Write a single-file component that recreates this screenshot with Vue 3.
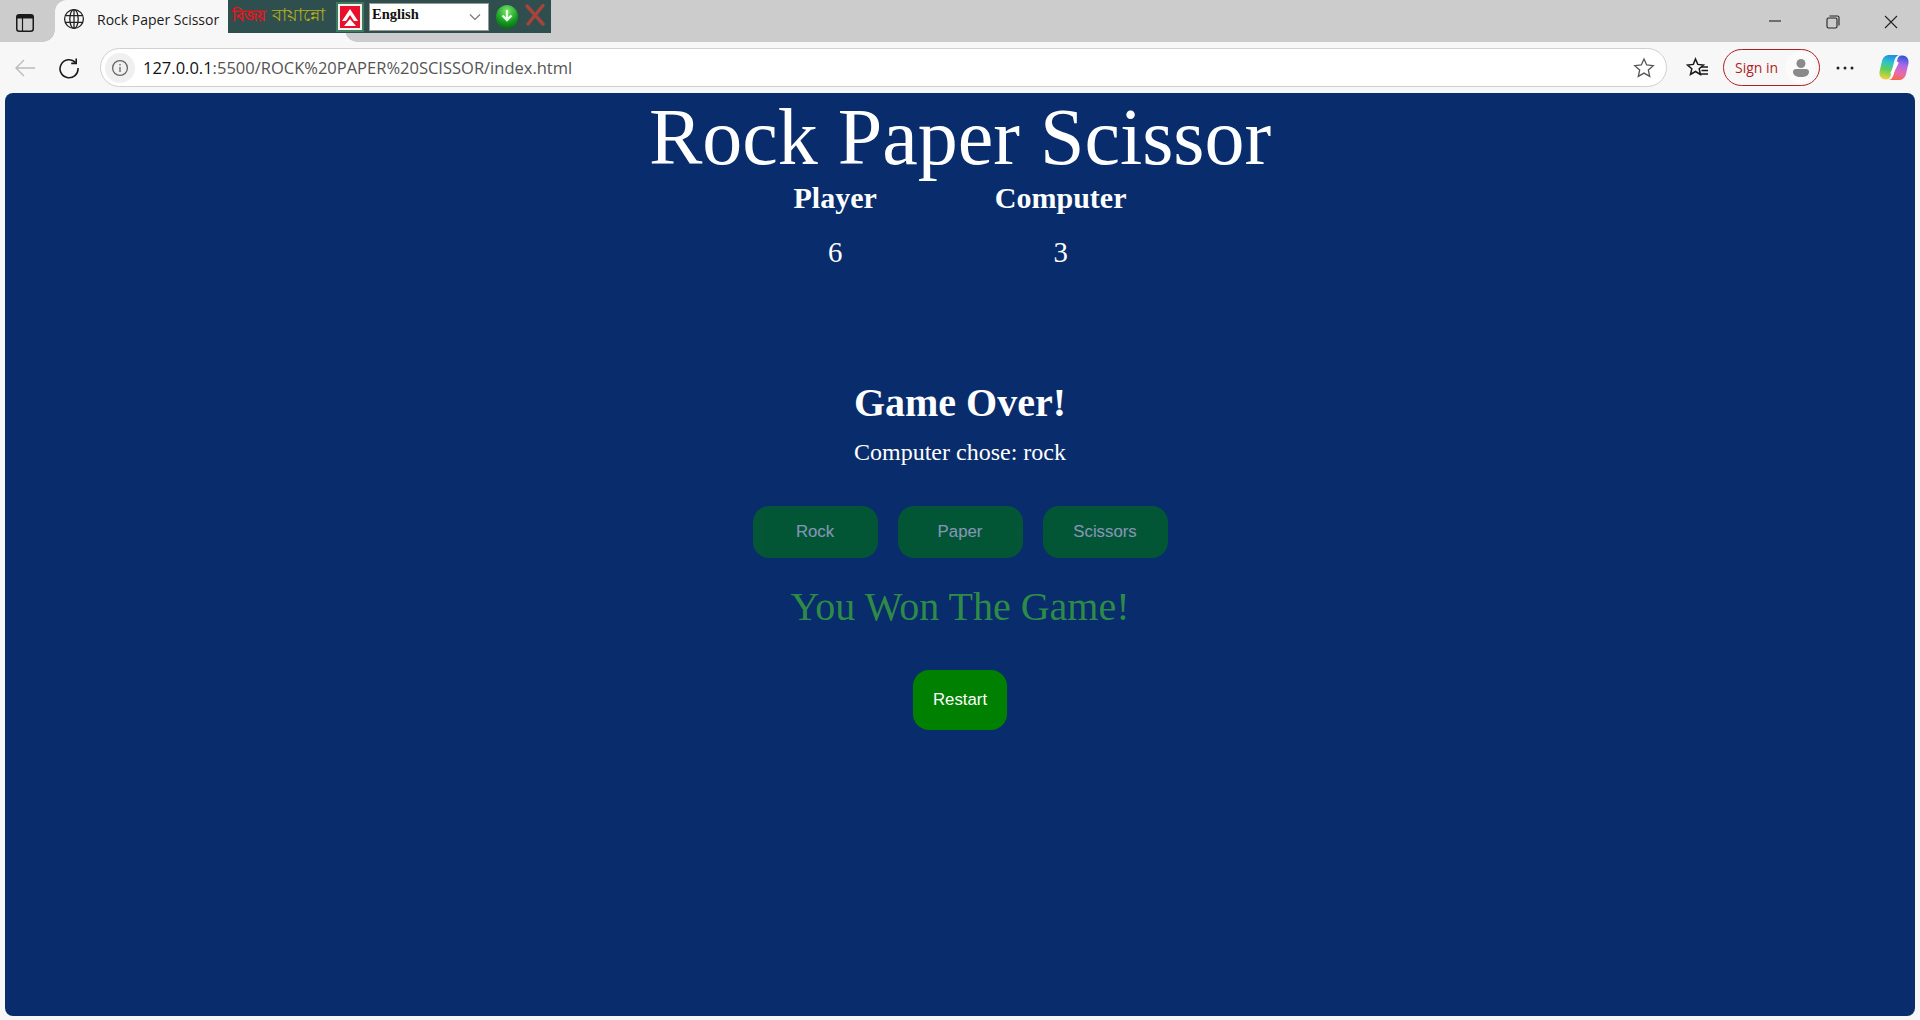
<template>
  <div class="browser">
    <!-- TAB STRIP -->
    <header class="tabstrip">
      <div class="tab-side">
        <svg width="18" height="18" viewBox="0 0 18 18" fill="none" stroke="#1a1a1a" stroke-width="1.5">
          <rect x="0.75" y="0.75" width="16.5" height="16.5" rx="2.5" />
          <path d="M1 1h16v3.500H1z" fill="#1a1a1a" stroke="none" />
          <path d="M6.500 4v13" stroke-width="1.2" />
        </svg>
      </div>
      <div class="tab">
        <svg class="globe" width="22" height="22" viewBox="0 0 22 22" fill="none" stroke="#222" stroke-width="1.3">
          <circle cx="11" cy="11" r="9.4" />
          <ellipse cx="11" cy="11" rx="4.2" ry="9.4" />
          <path d="M2.4 7.6h17.2M2.4 14.4h17.2M11 1.600v18.800" />
        </svg>
        <span class="tab-title">Rock Paper Scissor</span>
      </div>

      <!-- keyboard extension bar sitting over the tab strip -->
      <div class="ext-bar">
        <span class="ext-red" lang="bn">বিজয়</span>
        <span class="ext-yellow" lang="bn">বায়ান্নো</span>
        <span class="ext-logo">
          <svg width="20" height="22" viewBox="0 0 20 22">
            <rect width="20" height="22" fill="#e8102a" />
            <path d="M10 3 L18 15 H14 L10 9 L6 15 H2 Z" fill="#fff" />
            <path d="M4 20 L10 13 L16 20 Z" fill="#fff" />
          </svg>
        </span>
        <span class="ext-select">
          English
          <svg width="12" height="8" viewBox="0 0 12 8" fill="none" stroke="#777" stroke-width="1.2"><path d="M1 1.5l5 5 5-5" /></svg>
        </span>
        <span class="ext-down">
          <svg width="16" height="16" viewBox="0 0 16 16" fill="none" stroke="#e8ffe8" stroke-width="2.4"><path d="M8 1v9M3.500 6.500L8 11l4.500-4.500" /></svg>
        </span>
        <svg class="ext-close" width="22" height="22" viewBox="0 0 22 22" fill="none" stroke="#a6433c" stroke-width="3.4" stroke-linecap="round">
          <path d="M3 2l16 18M19 1.500L4 20" />
        </svg>
      </div>

      <div class="win-controls">
        <svg width="14" height="14" viewBox="0 0 14 14" stroke="#222" stroke-width="1.1"><path d="M1 6h12" /></svg>
        <svg width="14" height="14" viewBox="0 0 14 14" fill="none" stroke="#222" stroke-width="1.1">
          <rect x="1" y="3" width="10" height="10" rx="1.5" />
          <path d="M3.5 1h8a1.5 1.5 0 0 1 1.5 1.5v8" />
        </svg>
        <svg width="14" height="14" viewBox="0 0 14 14" stroke="#222" stroke-width="1.1"><path d="M1 1l12 12M13 1L1 13" /></svg>
      </div>
    </header>

    <!-- TOOLBAR -->
    <nav class="toolbar">
      <svg class="tool back" width="22" height="22" viewBox="0 0 22 22" fill="none" stroke="#bcbcbc" stroke-width="1.4">
        <path d="M21 11H2M10 3l-8 8 8 8" />
      </svg>
      <svg class="tool reload" width="22" height="22" viewBox="0 0 22 22" fill="none" stroke="#1c1c1c" stroke-width="1.6">
        <path d="M17.6 5.6A9 9 0 1 0 20 11" />
        <path d="M18.2 1.4v5h-5" />
      </svg>
      <div class="address">
        <span class="info">
          <svg width="18" height="18" viewBox="0 0 18 18" fill="none" stroke="#666" stroke-width="1.3">
            <circle cx="9" cy="9" r="7.4" />
            <path d="M9 8v5M9 5v1.6" />
          </svg>
        </span>
        <span class="url"><b>127.0.0.1</b>:5500/ROCK%20PAPER%20SCISSOR/index.html</span>
        <svg class="star" width="22" height="22" viewBox="0 0 22 22" fill="none" stroke="#555" stroke-width="1.3">
          <path d="M11 2l2.7 6 6.5.7-4.9 4.3 1.4 6.4-5.7-3.3-5.7 3.3 1.4-6.4L1.8 8.700l6.500-.7z" />
        </svg>
      </div>
      <svg class="favs" width="24" height="22" viewBox="0 0 24 22" fill="none" stroke="#1a1a1a" stroke-width="1.5">
        <path d="M9.500 2l2.300 5.400 5.700.6-4.300 3.800 1.200 5.700-4.900-3-5 3 1.300-5.700L1.500 8l5.800-.6z" />
        <path d="M15 10h7M15.500 13.500h6.500M13.500 17h8.500" />
      </svg>
      <div class="signin">
        <span>Sign in</span>
        <span class="avatar">
          <svg width="18" height="20" viewBox="0 0 18 20" fill="#8a8a8a">
            <circle cx="9" cy="5.500" r="4.500" />
            <path d="M1 14a3 3 0 0 1 3-3h10a3 3 0 0 1 3 3c0 3-3 5-8 5s-8-2-8-5z" />
          </svg>
        </span>
      </div>
      <svg class="dots" width="18" height="4" viewBox="0 0 18 4" fill="#222">
        <circle cx="2" cy="2" r="1.500" /><circle cx="9" cy="2" r="1.500" /><circle cx="16" cy="2" r="1.500" />
      </svg>
      <svg class="copilot" width="30" height="27" viewBox="0 0 30 27">
        <defs>
          <linearGradient id="cpA" x1="0.5" y1="0" x2="0.3" y2="1">
            <stop offset="0" stop-color="#1f8fe8" />
            <stop offset="0.3" stop-color="#2fc3c8" />
            <stop offset="0.6" stop-color="#5fd05a" />
            <stop offset="1" stop-color="#f7d238" />
          </linearGradient>
          <linearGradient id="cpB" x1="0.6" y1="0" x2="0.4" y2="1">
            <stop offset="0" stop-color="#2f55d8" />
            <stop offset="0.35" stop-color="#a868e8" />
            <stop offset="0.7" stop-color="#e86ab0" />
            <stop offset="1" stop-color="#f56a45" />
          </linearGradient>
        </defs>
        <path d="M10 1h11c-3 0-4.500 2-5.500 5L11.500 22c-.8 2.500-2.500 4-5 3.500C2 25 0 22 .5 18L3 7C4 3 7 1 10 1z" fill="url(#cpA)" />
        <path d="M20 26H9c3 0 4.500-2 5.500-5L18.500 5c.8-2.500 2.500-4 5-3.500C28 2 30 5 29.500 9L27 20C26 24 23 26 20 26z" fill="url(#cpB)" />
        <path d="M18 9l-5 10" stroke="#fff" stroke-width="3" stroke-linecap="round" />
      </svg>
    </nav>

    <!-- PAGE -->
    <main class="page">
      <h1>Rock Paper Scissor</h1>

      <div class="scores">
        <div class="score" v-for="s in scores" :key="s.name">
          <h3>{{ s.name }}</h3>
          <p>{{ s.value }}</p>
        </div>
      </div>

      <h2>Game Over!</h2>
      <p class="chose">Computer chose: rock</p>

      <div class="choices">
        <button v-for="c in choices" :key="c" class="choice" disabled>{{ c }}</button>
      </div>

      <p class="result">You Won The Game!</p>

      <button class="restart">Restart</button>
    </main>
  </div>
</template>

<script setup>
const scores = [
  { name: 'Player', value: 6 },
  { name: 'Computer', value: 3 }
]

const choices = ['Rock', 'Paper', 'Scissors']
</script>

<style>
html,
body {
  margin: 0;
  height: 100%;
  overflow: hidden;
}
</style>

<style scoped>
.browser {
  width: 1920px;
  height: 1020px;
  display: flex;
  flex-direction: column;
  background: #f7f7f7;
  font-family: "Open Sans", "Liberation Sans", sans-serif;
}

/* TAB STRIP */
.tabstrip {
  position: relative;
  height: 42px;
  flex: none;
  display: flex;
  align-items: flex-end;
  background: #cccccc;
}

.tab-side {
  width: 49px;
  height: 39px;
  padding-left: 0;
  margin-right: 6px;
  display: flex;
  align-items: center;
  justify-content: center;
}

.tab {
  position: relative;
  width: 290px;
  height: 42px;
  display: flex;
  align-items: center;
  gap: 12px;
  padding: 0 0 4px 8px;
  box-sizing: border-box;
  background: #f7f7f7;
  border-radius: 12px 12px 0 0;
}

/* curved feet of the active tab */
.tab::before,
.tab::after {
  content: "";
  position: absolute;
  bottom: 0;
  width: 12px;
  height: 12px;
}

.tab::before {
  left: -12px;
  background: radial-gradient(circle at 0 0, #cccccc 11.5px, #f7f7f7 12px);
}

.tab::after {
  right: -12px;
  background: radial-gradient(circle at 100% 0, #cccccc 11.5px, #f7f7f7 12px);
}

.tab-title {
  font-size: 14px;
  color: #1a1a1a;
}

.ext-bar {
  position: absolute;
  left: 228px;
  top: 0;
  width: 323px;
  height: 33px;
  display: flex;
  align-items: center;
  background: #2f4f4f;
  font-family: "Liberation Serif", serif;
}

.ext-red {
  margin-left: 4px;
  width: 40px;
  color: #e8141c;
  font-size: 15px;
  font-weight: 700;
  white-space: nowrap;
}

.ext-yellow {
  width: 64px;
  color: #b5ad1c;
  font-size: 17.5px;
  white-space: nowrap;
}

.ext-logo {
  width: 28px;
  height: 30px;
  display: flex;
  align-items: center;
  justify-content: center;
  background: #f4f4f4;
  box-sizing: border-box;
  border: 2px solid #3f7a5c;
}

.ext-select {
  margin-left: 5px;
  width: 120px;
  height: 28px;
  padding: 0 7px 4px 2px;
  box-sizing: border-box;
  display: flex;
  align-items: center;
  justify-content: space-between;
  background: #fff;
  border: 1px solid #999;
  color: #111;
  font-size: 14.5px;
  font-weight: 700;
}

.ext-select svg {
  margin-top: 4px;
}

.ext-down {
  margin-left: 7px;
  width: 22px;
  height: 24px;
  border-radius: 50%;
  display: flex;
  align-items: center;
  justify-content: center;
  background: radial-gradient(circle at 50% 25%, #7be86a, #149a20 55%, #064d10);
}

.ext-close {
  margin-left: 6px;
  margin-bottom: 4px;
}

.win-controls {
  position: absolute;
  right: 22px;
  top: 15px;
  display: flex;
  gap: 44px;
}

/* TOOLBAR */
.toolbar {
  height: 51px;
  flex: none;
  display: flex;
  align-items: center;
  box-sizing: border-box;
  padding: 0 0 0 14px;
  background: #f7f7f7;
}

.reload {
  margin-left: 22px;
}

.address {
  margin-left: 20px;
  width: 1567px;
  height: 39px;
  box-sizing: border-box;
  display: flex;
  align-items: center;
  padding: 0 11px 0 4px;
  background: #fff;
  border: 1px solid #d0d0d0;
  border-radius: 20px;
}

.info {
  width: 30px;
  height: 30px;
  border-radius: 50%;
  display: flex;
  align-items: center;
  justify-content: center;
  background: #f0f0f0;
}

.url {
  margin-left: 8px;
  flex: 1;
  font-size: 16.5px;
  color: #555;
}

.url b {
  font-weight: 400;
  color: #111;
}

.favs {
  margin-left: 19px;
}

.signin {
  margin-left: 13px;
  width: 97px;
  height: 37px;
  box-sizing: border-box;
  display: flex;
  align-items: center;
  justify-content: space-between;
  padding: 0 3px 0 11px;
  border: 1.5px solid #b01f24;
  border-radius: 19px;
  color: #b01f24;
  font-size: 14px;
}

.avatar {
  width: 31px;
  height: 31px;
  border-radius: 50%;
  background: #fbfbfb;
  display: flex;
  align-items: center;
  justify-content: center;
}

.dots {
  margin-left: 16px;
}

.copilot {
  margin-left: 25px;
}

/* PAGE */
.page {
  flex: 1;
  margin: 0 5px 4px;
  border-radius: 8px;
  background: #082c6c;
  color: #fff;
  font-family: "Liberation Serif", serif;
  text-align: center;
  display: flex;
  flex-direction: column;
  align-items: center;
}

h1 {
  margin: 0;
  font-size: 80px;
  font-weight: 400;
  line-height: 88px;
}

.scores {
  display: flex;
  gap: 118px;
}

.score h3 {
  margin: 0;
  font-size: 30px;
  font-weight: 700;
  line-height: 34px;
}

.score p {
  margin: 21px 0 0;
  font-size: 28.8px;
  line-height: 32px;
}

h2 {
  margin: 112px 0 0;
  font-size: 40px;
  font-weight: 700;
  line-height: 46px;
}

.chose {
  margin: 12px 0 0;
  font-size: 24px;
  line-height: 28px;
}

.choices {
  display: flex;
  gap: 20px;
  margin-top: 40px;
}

.choice {
  width: 125px;
  height: 52px;
  border: 0;
  border-radius: 16px;
  background: #008000;
  color: #fff;
  opacity: 0.5;
  font-family: "Liberation Sans", sans-serif;
  font-size: 16.8px;
}

.result {
  margin: 26px 0 0;
  font-size: 40px;
  line-height: 46px;
  color: #2e8b47;
}

.restart {
  margin-top: 40px;
  width: 94px;
  height: 60px;
  border: 0;
  border-radius: 16px;
  background: #008000;
  color: #fff;
  font-family: "Liberation Sans", sans-serif;
  font-size: 16.8px;
}
</style>
